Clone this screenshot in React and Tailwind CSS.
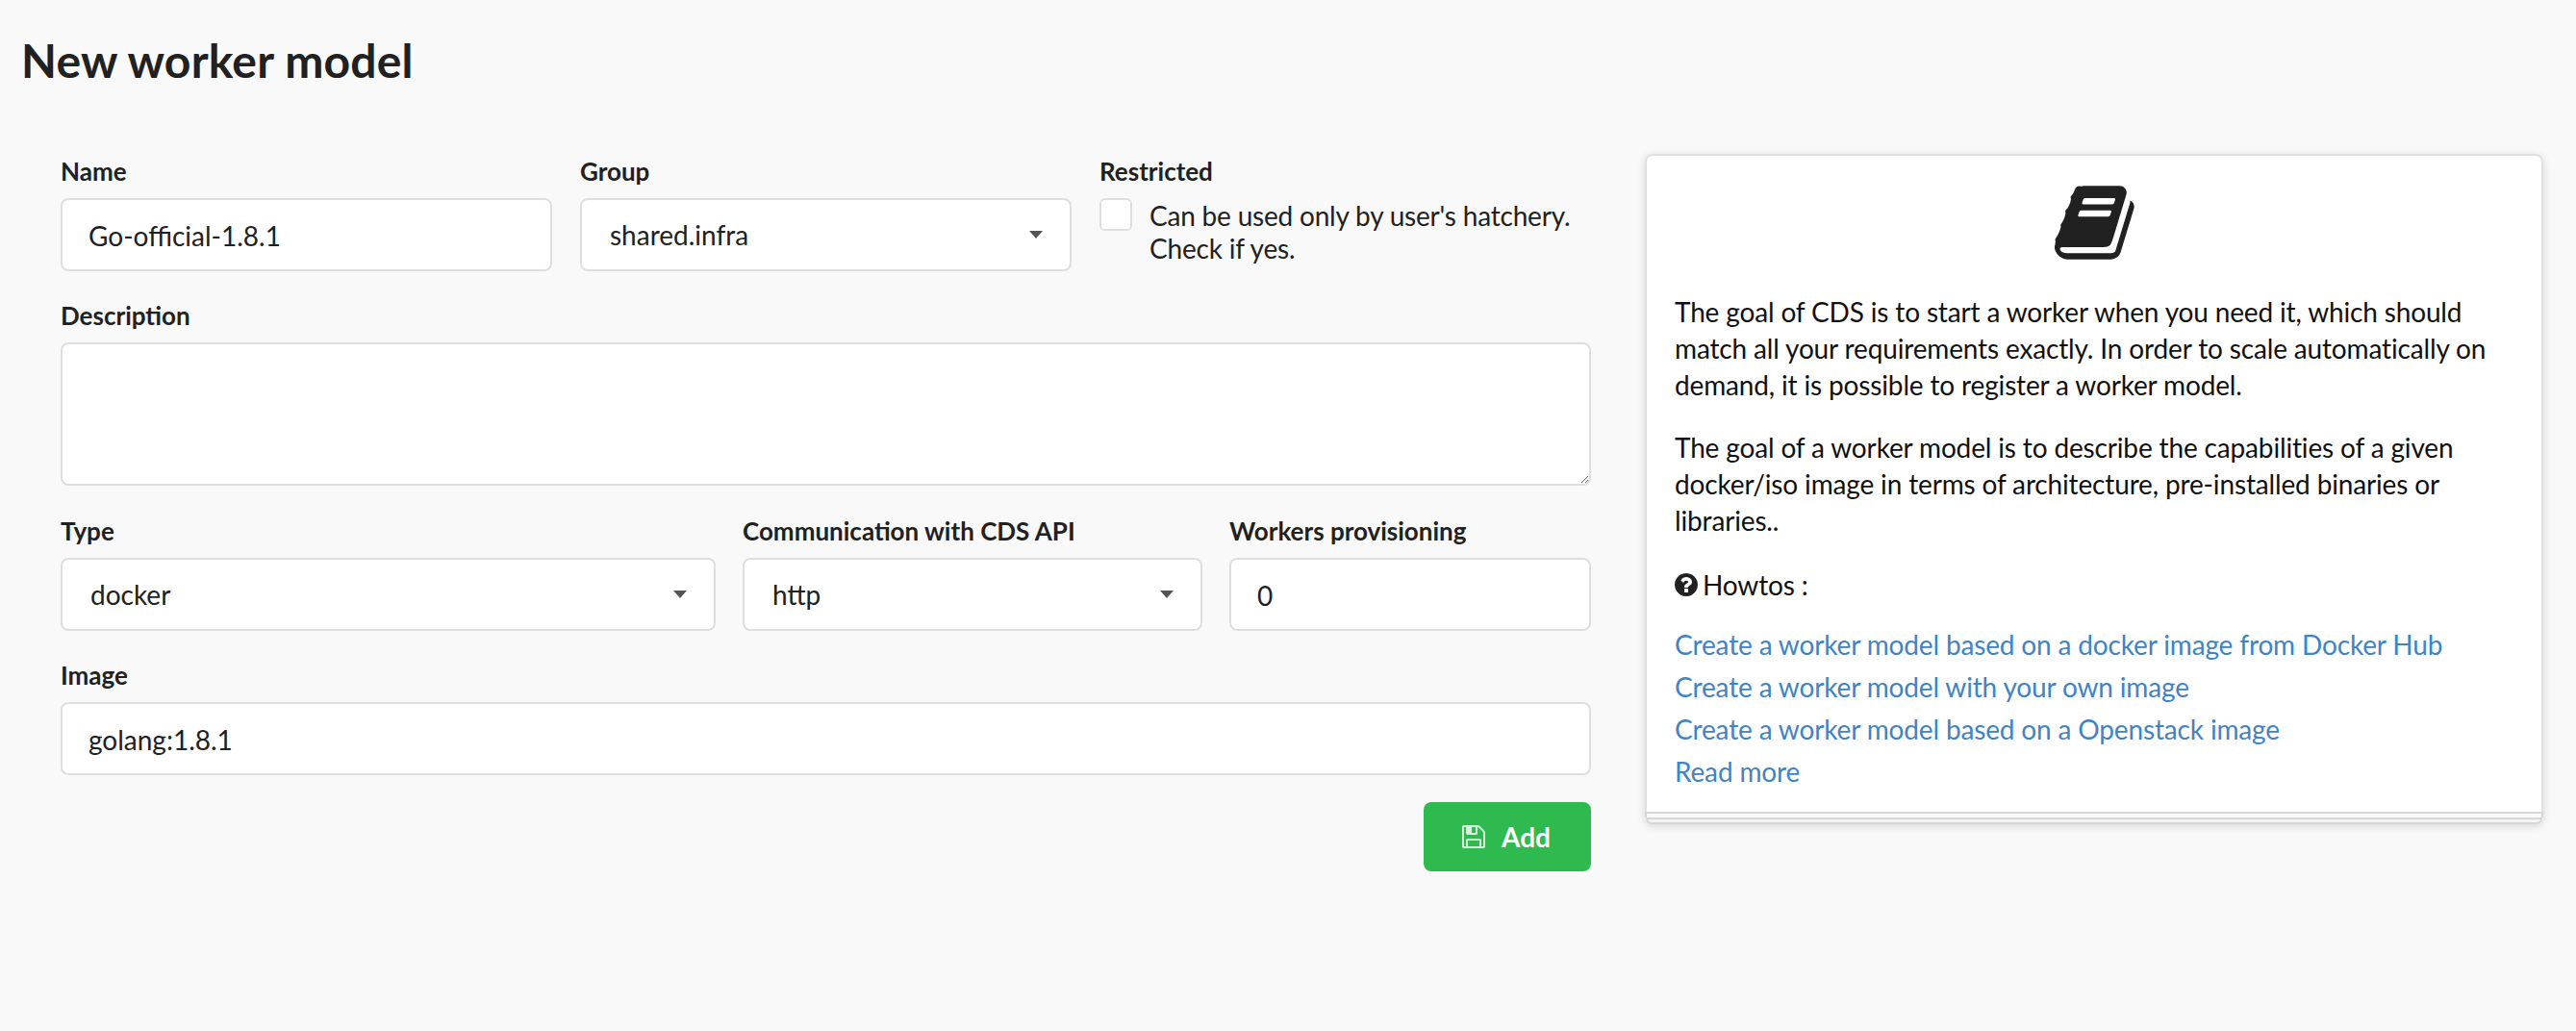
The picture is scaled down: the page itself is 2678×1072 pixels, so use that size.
import React from "react";

const BOOK_PATH =
  "M1639 478q40 57 18 129l-275 906q-19 64-76.5 107.5t-122.5 43.5h-923q-77 0-148.5-53.5t-99.5-131.5q-24-67-2-127 0-4 3-27t4-37q1-8-3-21.5t-3-19.5q2-11 8-21t16.5-23.5 16.5-23.5q23-38 45-91.5t30-91.5q3-10 .5-30t-.5-28q3-11 17-28t17-23q21-36 42-92t25-90q1-9-2.5-32t.5-28q4-13 22-30.5t22-22.5q19-26 42.5-84.5t27.5-96.5q1-8-3-25.5t-2-26.5q2-8 9-18t18-23 17-21q8-12 16.5-30.5t15-35 16-36 19.5-32 26.5-23.5 36-11.5 47.5 5.5l-1 3q38-9 51-9h761q74 0 114 56t18 130l-274 906q-36 119-71.5 153.5t-128.5 34.5h-869q-27 0-38 15-11 16-1 43 24 70 144 70h923q29 0 56-15.5t35-41.5l300-987q7-22 5-57 38 15 59 43zm-1064 2q-4 13 2 22.5t20 9.5h608q13 0 25.5-9.5t16.5-22.5l21-64q4-13-2-22.5t-20-9.5h-608q-13 0-25.5 9.5t-16.5 22.5zm-83 256q-4 13 2 22.5t20 9.5h608q13 0 25.5-9.5t16.5-22.5l21-64q4-13-2-22.5t-20-9.5h-608q-13 0-25.5 9.5t-16.5 22.5z";
const QUESTION_PATH =
  "M1024 1376v-192q0-14-9-23t-23-9h-192q-14 0-23 9t-9 23v192q0 14 9 23t23 9h192q14 0 23-9t9-23zm256-672q0-88-55.5-163t-138.5-116-170-41q-243 0-371 213-15 24 8 42l132 100q7 6 19 6 16 0 25-12 53-68 86-92 34-24 86-24 48 0 85.5 26t37.5 59q0 38-20 61t-68 45q-63 28-115.5 86.5t-52.5 125.5v36q0 14 9 23t23 9h192q14 0 23-9t9-23q0-19 21.5-49.5t54.5-49.5q32-18 49-28.5t46-35 44.5-48 28-60.5 12.5-81zm384 192q0 209-103 385.5t-279.5 279.5-385.5 103-385.5-103-279.5-279.5-103-385.5 103-385.5 279.5-279.5 385.5-103 385.5 103 279.5 279.5 103 385.5z";
const SAVE_PATH =
  "M512 1536h768v-384h-768v384zm896 0h128v-896q0-14-10-38.500t-20-34.500l-281-281q-10-10-34-20t-39-10v416q0 40-28 68t-68 28h-576q-40 0-68-28t-28-68v-416h-128v1280h128v-416q0-40 28-68t68-28h832q40 0 68 28t28 68v416zm-384-928v-320q0-13-9.500-22.500t-22.500-9.500h-192q-13 0-22.500 9.500t-9.500 22.500v320q0 13 9.500 22.500t22.500 9.500h192q13 0 22.500-9.500t9.500-22.500zm640 32v928q0 40-28 68t-68 28h-1344q-40 0-68-28t-28-68v-1344q0-40 28-68t68-28h928q40 0 88 20t76 48l280 280q28 28 48 76t20 88z";

function Icon({ path, className }) {
  return (
    <svg viewBox="0 0 1792 1792" className={className} fill="currentColor">
      <path d={path} />
    </svg>
  );
}

function Field({ label, children }) {
  return (
    <div className="flex flex-col min-w-0">
      <label className="h-[28px] mb-[13px] text-[26px] leading-[26px] font-bold text-[#212121]">
        {label}
      </label>
      {children}
    </div>
  );
}

function TextInput({ value }) {
  return (
    <input
      readOnly
      value={value}
      className="w-full h-[76px] px-[27px] pt-[2px] bg-white border-2 border-[#dedede] rounded-[8px] text-[28px] text-[#212121] outline-none"
    />
  );
}

function Dropdown({ value }) {
  return (
    <div className="flex items-center justify-between h-[76px] pl-[29px] pr-[28px] bg-white border-2 border-[#dedede] rounded-[8px] text-[28px] text-[#212121]">
      <span>{value}</span>
      <span className="w-0 h-0 border-x-[7px] border-x-transparent border-t-[8px] border-t-[#555555]" />
    </div>
  );
}

function HowtoLink({ children }) {
  return (
    <a href="#" className="block text-[28px] leading-[44px] text-[#4183c4] tracking-[-0.15px]">
      {children}
    </a>
  );
}

export default function App() {
  return (
    <div className="min-h-[1072px] bg-[#f9f9f9] font-['Lato',sans-serif] text-[#212121]">
      <h1 className="pl-[22px] pt-[33px] text-[48px] leading-[60px] font-bold tracking-[0.2px]">
        New worker model
      </h1>

      <div className="flex items-start pl-[63px] mt-[72px] gap-[56px]">
        <form className="w-[1591px] flex flex-col">
          <div className="grid grid-cols-3 gap-[29px] mb-[33px]">
            <Field label="Name">
              <TextInput value="Go-official-1.8.1" />
            </Field>
            <Field label="Group">
              <Dropdown value="shared.infra" />
            </Field>
            <Field label="Restricted">
              <div className="flex items-start gap-[18px]">
                <span className="w-[34px] h-[34px] shrink-0 bg-white border-2 border-[#dedede] rounded-[6px]" />
                <p className="pt-[1px] text-[28px] leading-[34px] tracking-[-0.2px]">
                  Can be used only by user's hatchery. Check if yes.
                </p>
              </div>
            </Field>
          </div>

          <div className="mb-[34px]">
            <Field label="Description">
              <textarea
                readOnly
                className="block w-full h-[149px] bg-white border-2 border-[#dedede] rounded-[8px] outline-none"
              />
            </Field>
          </div>

          <div className="grid grid-cols-[681px_478px_376px] gap-[28px] mb-[33px]">
            <Field label="Type">
              <Dropdown value="docker" />
            </Field>
            <Field label="Communication with CDS API">
              <Dropdown value="http" />
            </Field>
            <Field label="Workers provisioning">
              <TextInput value="0" />
            </Field>
          </div>

          <Field label="Image">
            <TextInput value="golang:1.8.1" />
          </Field>

          <div className="flex justify-end mt-[28px]">
            <button
              type="button"
              className="flex items-center gap-[15px] w-[174px] h-[72px] pl-[38px] bg-[#2eba4f] rounded-[8px] text-white text-[28px] font-bold"
            >
              <Icon path={SAVE_PATH} className="w-[28px] h-[28px] opacity-80" />
              Add
            </button>
          </div>
        </form>

        <aside className="w-[934px] shrink-0 -mt-[5px] shadow-[0_2px_8px_rgba(34,36,38,0.16)] rounded-[8px]">
          <div className="bg-white border-x-2 border-t-2 border-[#e0e0e0] rounded-t-[8px] px-[29px] pt-[25px] pb-[20px] text-[28px] leading-[38px] text-[#111111] tracking-[-0.15px]">
            <div className="flex justify-center h-[118px]">
              <Icon path={BOOK_PATH} className="ml-[7px] w-[89px] h-[89px] text-[#212121]" />
            </div>
            <p className="mb-[27px]">
              The goal of CDS is to start a worker when you need it, which should match all your
              requirements exactly. In order to scale automatically on demand, it is possible to
              register a worker model.
            </p>
            <p className="mb-[29px]">
              The goal of a worker model is to describe the capabilities of a given docker/iso image
              in terms of architecture, pre-installed binaries or libraries..
            </p>
            <p className="flex items-center gap-[3px] mb-[21px] -ml-[2px]">
              <Icon path={QUESTION_PATH} className="w-[28px] h-[28px] text-[#212121]" />
              Howtos :
            </p>
            <HowtoLink>Create a worker model based on a docker image from Docker Hub</HowtoLink>
            <HowtoLink>Create a worker model with your own image</HowtoLink>
            <HowtoLink>Create a worker model based on a Openstack image</HowtoLink>
            <HowtoLink>Read more</HowtoLink>
          </div>
          <div className="h-[6px] bg-[#f9f9f9] border-x-2 border-t-2 border-[#d6d6d6]" />
          <div className="h-[7px] mx-[1px] bg-[#f4f4f4] border-x-2 border-y-2 border-[#d6d6d6] rounded-b-[6px]" />
        </aside>
      </div>
    </div>
  );
}
